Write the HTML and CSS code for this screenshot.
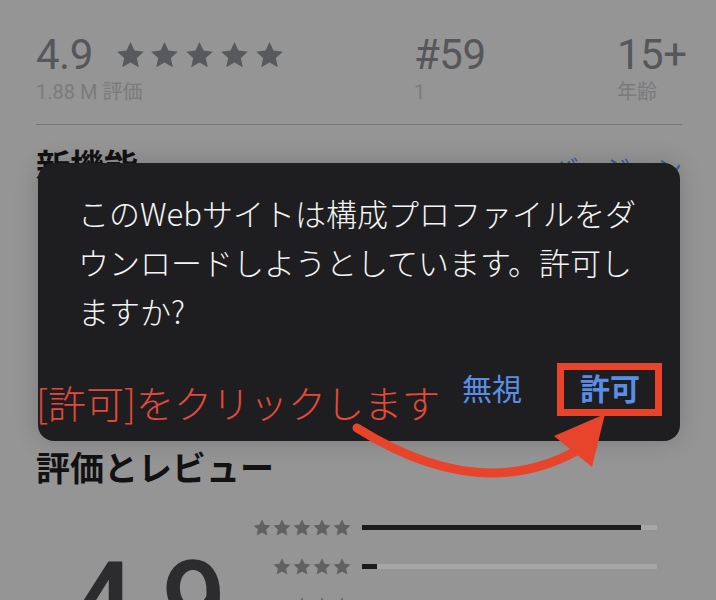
FILE: index.html
```html
<!DOCTYPE html>
<html lang="ja">
<head>
<meta charset="utf-8">
<title>App Store</title>
<link rel="stylesheet" href="styles.css">
</head>
<body>
<svg class="defs" width="0" height="0" aria-hidden="true">
  <defs>
    <symbol id="star" viewBox="0 0 24 24">
      <path d="M12 1.6l3.05 6.6 7.2.82-5.35 4.9 1.48 7.1L12 17.4l-6.38 3.62 1.48-7.1-5.35-4.9 7.2-.82z"/>
    </symbol>
  </defs>
</svg>

<main class="page">
  <section class="stats">
    <div class="stat">
      <div class="stat-main">
        <span class="stat-num">4.9</span>
        <span class="stars-lg">
          <svg><use href="#star"/></svg><svg><use href="#star"/></svg><svg><use href="#star"/></svg><svg><use href="#star"/></svg><svg><use href="#star"/></svg>
        </span>
      </div>
      <div class="stat-sub">1.88 M 評価</div>
    </div>
    <div class="stat">
      <div class="stat-main"><span class="stat-num">#59</span></div>
      <div class="stat-sub">1</div>
    </div>
    <div class="stat">
      <div class="stat-main"><span class="stat-num">15+</span></div>
      <div class="stat-sub">年齢</div>
    </div>
  </section>
  <hr class="divider">

  <section class="whatsnew">
    <div class="section-head">
      <h2 class="section-title">新機能</h2>
      <a class="section-link">バージョン</a>
    </div>
  </section>

  <section class="reviews">
    <h2 class="section-title">評価とレビュー</h2>
    <div class="ratings">
      <div class="big-score">4.9</div>
      <div class="rows">
        <div class="row">
          <span class="row-stars"><svg><use href="#star"/></svg><svg><use href="#star"/></svg><svg><use href="#star"/></svg><svg><use href="#star"/></svg><svg><use href="#star"/></svg></span>
          <span class="bar"><span class="fill" style="width:94.6%"></span></span>
        </div>
        <div class="row">
          <span class="row-stars"><svg><use href="#star"/></svg><svg><use href="#star"/></svg><svg><use href="#star"/></svg><svg><use href="#star"/></svg></span>
          <span class="bar"><span class="fill" style="width:5%"></span></span>
        </div>
        <div class="row">
          <span class="row-stars"><svg><use href="#star"/></svg><svg><use href="#star"/></svg><svg><use href="#star"/></svg></span>
          <span class="bar"><span class="fill" style="width:1.5%"></span></span>
        </div>
      </div>
    </div>
  </section>
</main>

<div class="alert">
  <p class="alert-msg">このWebサイトは構成プロファイルをダウンロードしようとしています。許可しますか?</p>
  <div class="alert-actions">
    <span class="alert-btn">無視</span>
    <span class="alert-btn alert-btn-primary">許可</span>
  </div>
</div>

<div class="callout-box"></div>
<div class="callout-text">[許可]をクリックします</div>
<svg class="callout-arrow" width="716" height="600" viewBox="0 0 716 600" aria-hidden="true">
  <path d="M357 428 Q480 505 578 450" />
  <polygon points="605,414 554,436 592,467" />
</svg>
</body>
</html>
```

FILE: styles.css
```css
html, body {
  margin: 0;
  padding: 0;
}

body {
  width: 716px;
  height: 600px;
  overflow: hidden;
  background: #959595;
  font-family: "Roboto", "Noto Sans CJK JP", sans-serif;
  position: relative;
}

.defs {
  position: absolute;
  width: 0;
  height: 0;
}

.page {
  padding: 0 34px 0 36px;
}

/* stats row */
.stats {
  display: grid;
  grid-template-columns: 378px 203px 1fr;
  padding-top: 34px;
}

.stat-main {
  display: flex;
  align-items: center;
  height: 42px;
}

.stat-num {
  font-size: 42px;
  line-height: 42px;
  color: #56575a;
  font-weight: 400;
  letter-spacing: -0.5px;
}

.stars-lg {
  display: flex;
  gap: 3.7px;
  margin-left: 22px;
  margin-top: 0;
}

.stars-lg svg {
  width: 31px;
  height: 31px;
  fill: #58595c;
}

.stat-sub {
  margin-top: 4px;
  font-size: 20px;
  line-height: 24px;
  color: #7b7b7d;
}

.divider {
  margin: 20px 0 0;
  border: 0;
  height: 1px;
  background: #767676;
}

/* sections */
.whatsnew {
  height: 322px;
  box-sizing: border-box;
  padding-top: 20px;
}

.section-head {
  display: flex;
  justify-content: space-between;
  align-items: baseline;
}

.section-title {
  margin: 0;
  font-family: "Noto Sans CJK JP", sans-serif;
  font-size: 34px;
  line-height: 40px;
  font-weight: 700;
  color: #121212;
}

.section-link {
  font-family: "Noto Sans CJK JP", sans-serif;
  font-size: 26px;
  color: #3d5f9e;
}

.ratings {
  display: flex;
  margin-top: 21px;
}

.big-score {
  width: 216px;
  box-sizing: border-box;
  padding-left: 34px;
  margin-top: 38px;
  font-size: 115px;
  line-height: 115px;
  font-weight: 500;
  letter-spacing: -3px;
  color: #2c2c2e;
}

.rows {
  display: flex;
  flex-direction: column;
}

.row {
  display: flex;
  align-items: center;
  height: 39px;
}

.row-stars {
  width: 100px;
  display: flex;
  justify-content: flex-end;
  gap: 0;
}

.row-stars svg {
  width: 20px;
  height: 20px;
  fill: #616163;
}

.bar {
  margin-left: 10px;
  width: 295px;
  height: 5px;
  background: #a7a7a7;
  border-radius: 1px;
  display: flex;
}

.fill {
  height: 100%;
  background: #1c1c1e;
}

/* alert overlay */
.alert {
  position: absolute;
  left: 38px;
  top: 163px;
  width: 642px;
  height: 278px;
  box-sizing: border-box;
  padding: 25px 40px 0 40px;
  background: #1e1e20;
  border-radius: 16px;
  box-shadow: 0 0 24px rgba(0, 0, 0, 0.18);
}

.alert-msg {
  margin: 0;
  font-family: "Noto Sans CJK JP", sans-serif;
  font-weight: 300;
  font-size: 31px;
  line-height: 49px;
  color: #f4f4f4;
}

.alert-actions {
  display: flex;
  justify-content: flex-end;
  gap: 58px;
  margin-top: 32px;
}

.alert-btn {
  font-family: "Noto Sans CJK JP", sans-serif;
  font-size: 30px;
  line-height: 40px;
  color: #5a8ee6;
}

.alert-btn-primary {
  font-weight: 700;
}

/* annotation */
.callout-box {
  position: absolute;
  left: 557px;
  top: 363px;
  width: 105px;
  height: 53px;
  box-sizing: border-box;
  border: 7px solid #e8442b;
}

.callout-text {
  position: absolute;
  left: 36px;
  top: 383px;
  font-family: "Noto Sans CJK JP", sans-serif;
  font-weight: 300;
  font-size: 38px;
  line-height: 38px;
  color: #e4493a;
  white-space: nowrap;
}

.callout-arrow {
  position: absolute;
  left: 0;
  top: 0;
  pointer-events: none;
}

.callout-arrow path {
  fill: none;
  stroke: #e8442b;
  stroke-width: 9;
  stroke-linecap: round;
}

.callout-arrow polygon {
  fill: #e8442b;
}
```
